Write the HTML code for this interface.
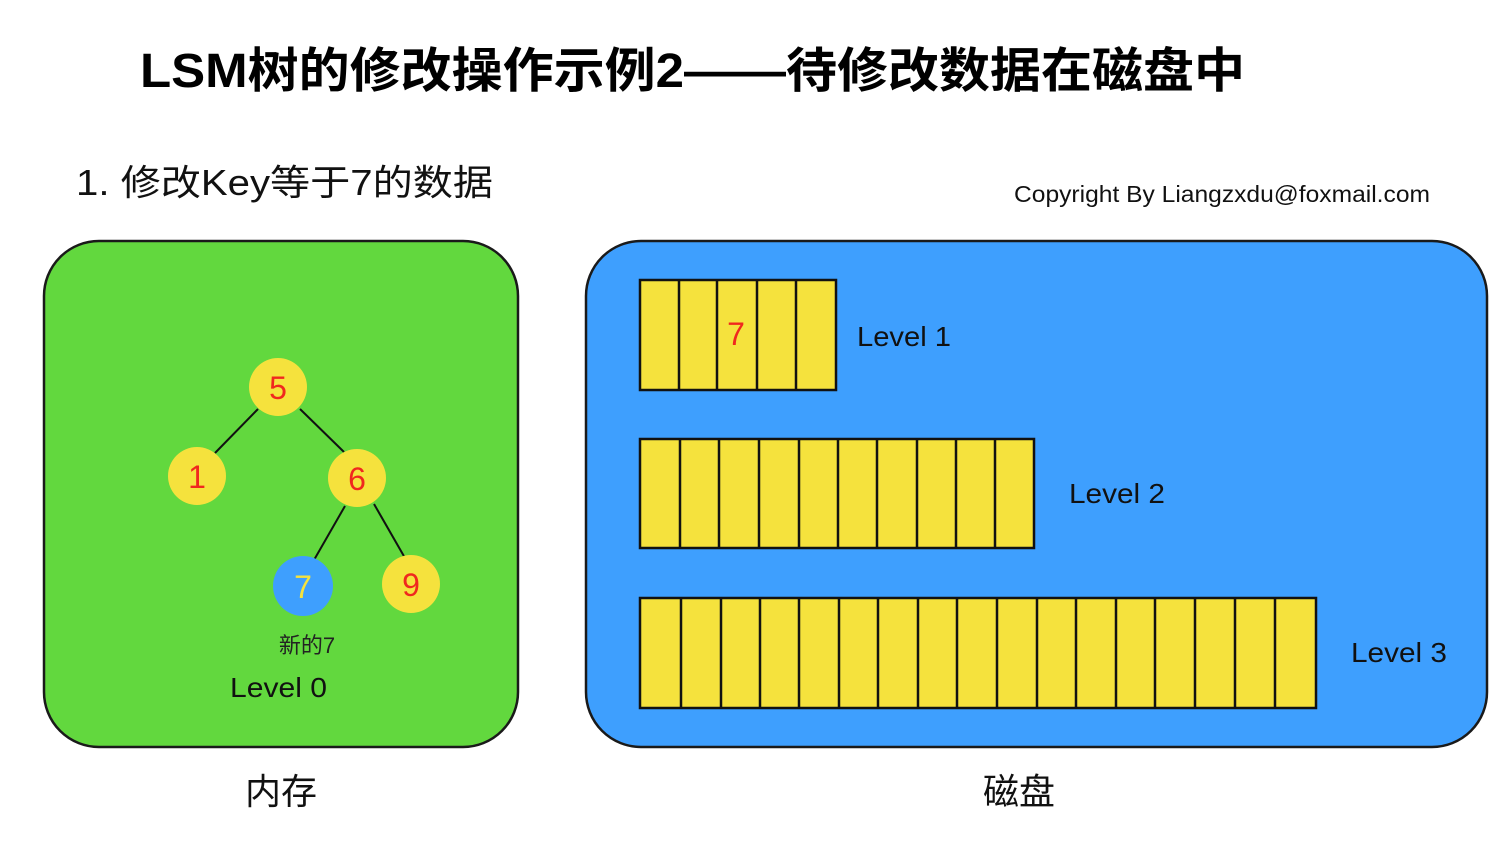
<!DOCTYPE html>
<html><head><meta charset="utf-8"><style>
body{margin:0;background:#fff;width:1509px;height:837px;overflow:hidden}
svg text{font-family:"Liberation Sans","Noto Sans CJK SC",sans-serif}
</style></head><body>
<svg width="1509" height="837" xmlns="http://www.w3.org/2000/svg">
<text x="140" y="87" font-size="48" font-weight="bold" fill="#000" textLength="1105" lengthAdjust="spacingAndGlyphs">LSM树的修改操作示例2——待修改数据在磁盘中</text>
<text x="76" y="195" font-size="36" fill="#111" textLength="417" lengthAdjust="spacingAndGlyphs">1. 修改Key等于7的数据</text>
<text x="1014" y="202" font-size="23" fill="#111" textLength="416" lengthAdjust="spacingAndGlyphs">Copyright By Liangzxdu@foxmail.com</text>
<rect x="44" y="241" width="474" height="506" rx="55" fill="#62d83e" stroke="#1a1a1a" stroke-width="2.5"/>
<rect x="586" y="241" width="901" height="506" rx="55" fill="#3e9ffe" stroke="#1a1a1a" stroke-width="2.5"/>
<g stroke="#111" stroke-width="2">
<line x1="258" y1="409" x2="215" y2="453"/><line x1="300" y1="409" x2="344" y2="452"/>
<line x1="345" y1="506" x2="314" y2="560"/><line x1="374" y1="504" x2="405" y2="558"/>
</g>
<g fill="#f5e23d"><circle cx="278" cy="387" r="29"/><circle cx="197" cy="476" r="29"/><circle cx="357" cy="478" r="29"/><circle cx="411" cy="584" r="29"/></g>
<circle cx="303" cy="586" r="30" fill="#3e9ffe"/>
<g font-size="32" fill="#f0281e" text-anchor="middle"><text x="278" y="399">5</text><text x="197" y="488">1</text><text x="357" y="490">6</text><text x="411" y="596">9</text></g>
<text x="303" y="598" font-size="32" fill="#f5e23d" text-anchor="middle">7</text>
<text x="307" y="653" font-size="22" fill="#222" text-anchor="middle">新的7</text>
<text x="230" y="697" font-size="28" fill="#111" textLength="97" lengthAdjust="spacingAndGlyphs">Level 0</text>
<g fill="#f5e23d" stroke="#111" stroke-width="2.5">
<rect x="640" y="280" width="196" height="110"/>
<rect x="640" y="439" width="394" height="109"/>
<rect x="640" y="598" width="676" height="110"/>
</g>
<g stroke="#111" stroke-width="2.5">
<line x1="679" y1="280" x2="679" y2="390"/><line x1="717" y1="280" x2="717" y2="390"/><line x1="757" y1="280" x2="757" y2="390"/><line x1="796" y1="280" x2="796" y2="390"/>
<line x1="680" y1="439" x2="680" y2="548"/><line x1="719" y1="439" x2="719" y2="548"/><line x1="759" y1="439" x2="759" y2="548"/><line x1="799" y1="439" x2="799" y2="548"/><line x1="838" y1="439" x2="838" y2="548"/><line x1="877" y1="439" x2="877" y2="548"/><line x1="917" y1="439" x2="917" y2="548"/><line x1="956" y1="439" x2="956" y2="548"/><line x1="995" y1="439" x2="995" y2="548"/>
<line x1="681" y1="598" x2="681" y2="708"/><line x1="721" y1="598" x2="721" y2="708"/><line x1="760" y1="598" x2="760" y2="708"/><line x1="799" y1="598" x2="799" y2="708"/><line x1="839" y1="598" x2="839" y2="708"/><line x1="878" y1="598" x2="878" y2="708"/><line x1="918" y1="598" x2="918" y2="708"/><line x1="957" y1="598" x2="957" y2="708"/><line x1="997" y1="598" x2="997" y2="708"/><line x1="1037" y1="598" x2="1037" y2="708"/><line x1="1076" y1="598" x2="1076" y2="708"/><line x1="1116" y1="598" x2="1116" y2="708"/><line x1="1155" y1="598" x2="1155" y2="708"/><line x1="1195" y1="598" x2="1195" y2="708"/><line x1="1235" y1="598" x2="1235" y2="708"/><line x1="1275" y1="598" x2="1275" y2="708"/>
</g>
<text x="736" y="345" font-size="32" fill="#f0281e" text-anchor="middle">7</text>
<text x="857" y="346" font-size="28" fill="#111" textLength="94" lengthAdjust="spacingAndGlyphs">Level 1</text>
<text x="1069" y="503" font-size="28" fill="#111" textLength="96" lengthAdjust="spacingAndGlyphs">Level 2</text>
<text x="1351" y="662" font-size="28" fill="#111" textLength="96" lengthAdjust="spacingAndGlyphs">Level 3</text>
<text x="281" y="804" font-size="36" fill="#111" text-anchor="middle">内存</text>
<text x="1019" y="804" font-size="36" fill="#111" text-anchor="middle">磁盘</text>
</svg>
</body></html>
